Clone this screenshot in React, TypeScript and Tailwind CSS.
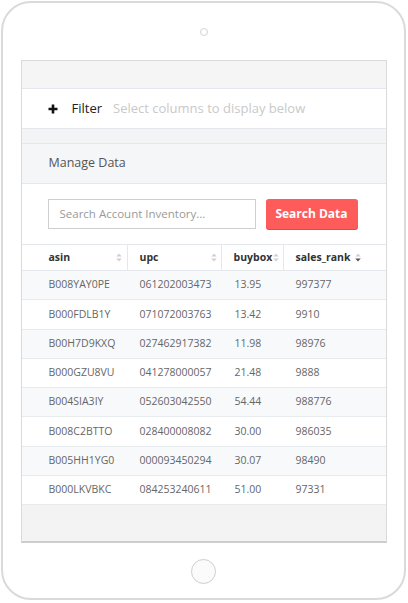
import React from "react";

const rows = [
  ["B008YAY0PE", "061202003473", "13.95", "997377"],
  ["B000FDLB1Y", "071072003763", "13.42", "9910"],
  ["B00H7D9KXQ", "027462917382", "11.98", "98976"],
  ["B000GZU8VU", "041278000057", "21.48", "9888"],
  ["B004SIA3IY", "052603042550", "54.44", "988776"],
  ["B008C2BTTO", "028400008082", "30.00", "986035"],
  ["B005HH1YG0", "000093450294", "30.07", "98490"],
  ["B000LKVBKC", "084253240611", "51.00", "97331"],
];

function SortIcon({ active }: { active?: boolean }) {
  return (
    <svg width="6" height="9" viewBox="0 0 6 9" className="shrink-0">
      <path d="M3 0.5L5.8 3.6H0.2Z" fill="#d0d0d0" />
      <path d="M3 8.5L0.2 5.4H5.8Z" fill={active ? "#555555" : "#d0d0d0"} />
    </svg>
  );
}

export default function App() {
  return (
    <div
      className="w-[408px] h-[603px] bg-white p-[1px]"
      style={{ fontFamily: "'Open Sans', 'Liberation Sans', sans-serif" }}
    >
      <div className="w-[405px] h-[599px] border-2 border-[#dadada] rounded-[30px] flex flex-col items-center">
        <div className="mt-[25px] w-[8px] h-[8px] rounded-full border border-[#d4d4d4]" />
        <div className="mt-[24px] w-[366px] border border-[#dadada] border-b-2 border-b-[#cdcdcd] flex flex-col">
          {/* top bar */}
          <div className="h-[28px] bg-[#f5f5f5] border-b border-[#e4e8ec]" />
          {/* filter row */}
          <div className="h-[40px] bg-white border-b border-[#e4e8ec] flex items-center pl-[26px]">
            <svg width="10" height="10" viewBox="0 0 10 10" className="shrink-0">
              <path d="M5 0.5V9.5M0.5 5H9.5" stroke="#111" strokeWidth="2.6" />
            </svg>
            <span className="ml-[14px] text-[13px] text-[#222]">Filter</span>
            <span className="ml-[11px] text-[13px] text-[#c9c9c9]">Select columns to display below</span>
          </div>
          {/* gap */}
          <div className="h-[15px] bg-[#f3f4f6] border-b border-[#e4e8ec]" />
          {/* manage data header */}
          <div className="h-[40px] bg-[#f5f6f8] border-b border-[#e4e8ec] flex items-center pl-[27px]">
            <span className="text-[12.5px] text-[#555]">Manage Data</span>
          </div>
          {/* search */}
          <div className="h-[60px] bg-white flex items-center pl-[26px]">
            <div className="w-[208px] h-[30px] border border-[#cfcfcf] flex items-center pl-[11px]">
              <span className="text-[11.5px] text-[#9a9a9a]">Search Account Inventory...</span>
            </div>
            <div className="ml-[10px] w-[92px] h-[30px] rounded-[3px] bg-[#fe5b5b] shadow-[0_1px_0_#e04a4a] flex items-center justify-center">
              <span className="text-[12px] font-bold text-white">Search Data</span>
            </div>
          </div>
          {/* table header */}
          <div className="grid grid-cols-[106px_94px_62px_102px] h-[27px] border-y border-[#e4e8ec] bg-white text-[10.5px] font-bold text-[#333]">
            <div className="flex items-center justify-between pl-[27px] pr-[5px] border-r border-[#e4e8ec]">
              <span>asin</span>
              <SortIcon />
            </div>
            <div className="flex items-center justify-between pl-[12px] pr-[4px] border-r border-[#e4e8ec]">
              <span>upc</span>
              <SortIcon />
            </div>
            <div className="flex items-center justify-between pl-[12px] pr-[4px] border-r border-[#e4e8ec]">
              <span>buybox</span>
              <SortIcon />
            </div>
            <div className="flex items-center gap-[4px] pl-[12px]">
              <span>sales_rank</span>
              <SortIcon active />
            </div>
          </div>
          {/* rows */}
          {rows.map((r, i) => (
            <div
              key={r[0]}
              className={`grid grid-cols-[106px_94px_62px_102px] h-[29.25px] border-b border-[#e8ebee] text-[10.5px] text-[#666] ${
                i % 2 === 0 ? "bg-[#f8f9fb]" : "bg-white"
              }`}
            >
              <div className="flex items-center pl-[27px]">{r[0]}</div>
              <div className="flex items-center pl-[12px]">{r[1]}</div>
              <div className="flex items-center pl-[13px]">{r[2]}</div>
              <div className="flex items-center pl-[12px]">{r[3]}</div>
            </div>
          ))}
          {/* bottom gray */}
          <div className="h-[36px] bg-[#f3f3f3]" />
        </div>
        <div className="mt-[16px] w-[25px] h-[25px] rounded-full border border-[#cfcfcf] bg-[#fbfbfb]" />
      </div>
    </div>
  );
}
